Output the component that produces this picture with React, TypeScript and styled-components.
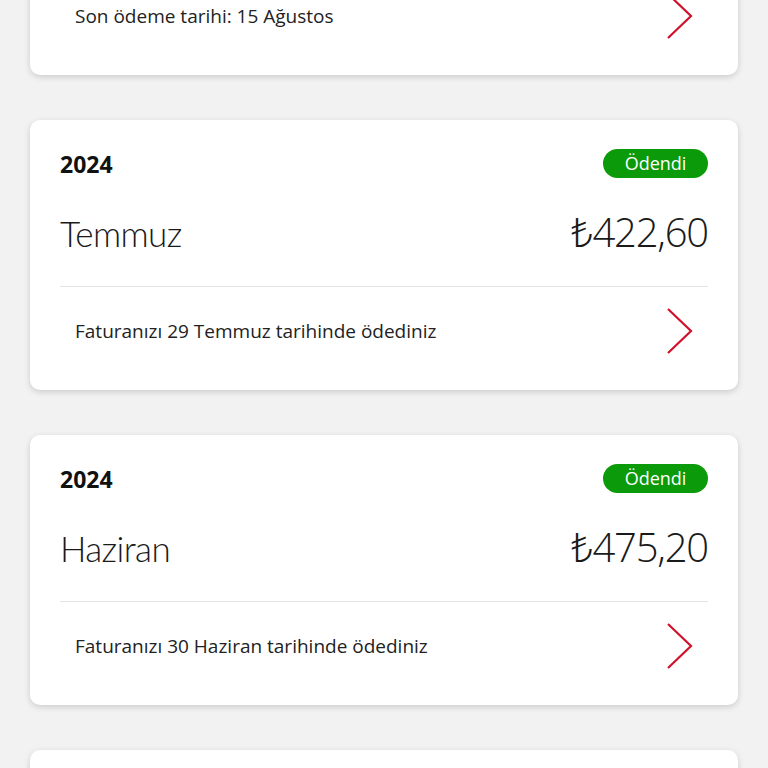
import React from 'react';
import styled, { createGlobalStyle } from 'styled-components';

const GlobalStyle = createGlobalStyle`
  html, body {
    margin: 0;
    padding: 0;
    background: #f2f2f2;
    font-family: "Open Sans", "Noto Sans", sans-serif;
    color: #222;
  }
`;

const Page = styled.div`
  height: 768px;
  overflow: hidden;
`;

const List = styled.div`
  display: flex;
  flex-direction: column;
  gap: 45px;
  padding: 0 30px;
  /* list is scrolled: first card sits partly above the viewport */
  margin-top: -195px;
`;

const Card = styled.div`
  background: #fff;
  border-radius: 10px;
  box-shadow: 0 2px 6px rgba(0, 0, 0, 0.16);
  padding: 29px 30px 16px;
  height: 270px;
  box-sizing: border-box;
  display: flex;
  flex-direction: column;
`;

const TopRow = styled.div`
  display: flex;
  justify-content: space-between;
  align-items: center;
  height: 29px;
`;

const Year = styled.div`
  font-size: 23px;
  font-weight: 700;
  color: #111;
`;

const Badge = styled.div<{ $color: string }>`
  background: ${ (p) => p.$color };
  color: #fff;
  font-size: 18px;
  line-height: 29px;
  height: 29px;
  width: 105px;
  text-align: center;
  border-radius: 15px;
`;

const MainRow = styled.div`
  display: flex;
  justify-content: space-between;
  align-items: center;
  margin-top: 28px;
  height: 50px;
`;

const Month = styled.div`
  font-family: Lato, "Open Sans", sans-serif;
  font-size: 35px;
  font-weight: 300;
  letter-spacing: -0.6px;
  color: #1a1a1a;
  padding-top: 4px;
`;

const Amount = styled.div`
  font-size: 40px;
  font-weight: 300;
  letter-spacing: -1.2px;
  color: #1a1a1a;
`;

const Divider = styled.div`
  height: 1px;
  background: #e4e4e4;
  margin-top: 30px;
`;

const LinkRow = styled.div`
  flex: 1;
  display: flex;
  align-items: center;
  justify-content: space-between;
  padding-left: 15px;
  padding-right: 15px;
`;

const LinkText = styled.div`
  font-size: 19px;
  color: #222;
`;

const Chevron = () => (
  <svg width="26" height="46" viewBox="0 0 26 46">
    <path d="M1 1 L24 23 L1 45" fill="none" stroke="#d0112b" strokeWidth="2.2" />
  </svg>
);

type Bill = {
  year: string;
  month: string;
  amount: string;
  status: string;
  statusColor: string;
  note: string;
};

const bills: Bill[] = [
  {
    year: '2024',
    month: 'Ağustos',
    amount: '₺438,90',
    status: 'Ödenmedi',
    statusColor: '#e60000',
    note: 'Son ödeme tarihi: 15 Ağustos',
  },
  {
    year: '2024',
    month: 'Temmuz',
    amount: '₺422,60',
    status: 'Ödendi',
    statusColor: '#0a9a0a',
    note: 'Faturanızı 29 Temmuz tarihinde ödediniz',
  },
  {
    year: '2024',
    month: 'Haziran',
    amount: '₺475,20',
    status: 'Ödendi',
    statusColor: '#0a9a0a',
    note: 'Faturanızı 30 Haziran tarihinde ödediniz',
  },
  {
    year: '2024',
    month: 'Mayıs',
    amount: '₺451,30',
    status: 'Ödendi',
    statusColor: '#0a9a0a',
    note: 'Faturanızı 29 Mayıs tarihinde ödediniz',
  },
];

const App = () => (
  <Page>
    <GlobalStyle />
    <List>
      {bills.map((bill, index) => (
        <Card key={ index }>
          <TopRow>
            <Year>{bill.year}</Year>
            <Badge $color={ bill.statusColor }>{bill.status}</Badge>
          </TopRow>
          <MainRow>
            <Month>{bill.month}</Month>
            <Amount>{bill.amount}</Amount>
          </MainRow>
          <Divider />
          <LinkRow>
            <LinkText>{bill.note}</LinkText>
            <Chevron />
          </LinkRow>
        </Card>
      ))}
    </List>
  </Page>
);

export default App;
